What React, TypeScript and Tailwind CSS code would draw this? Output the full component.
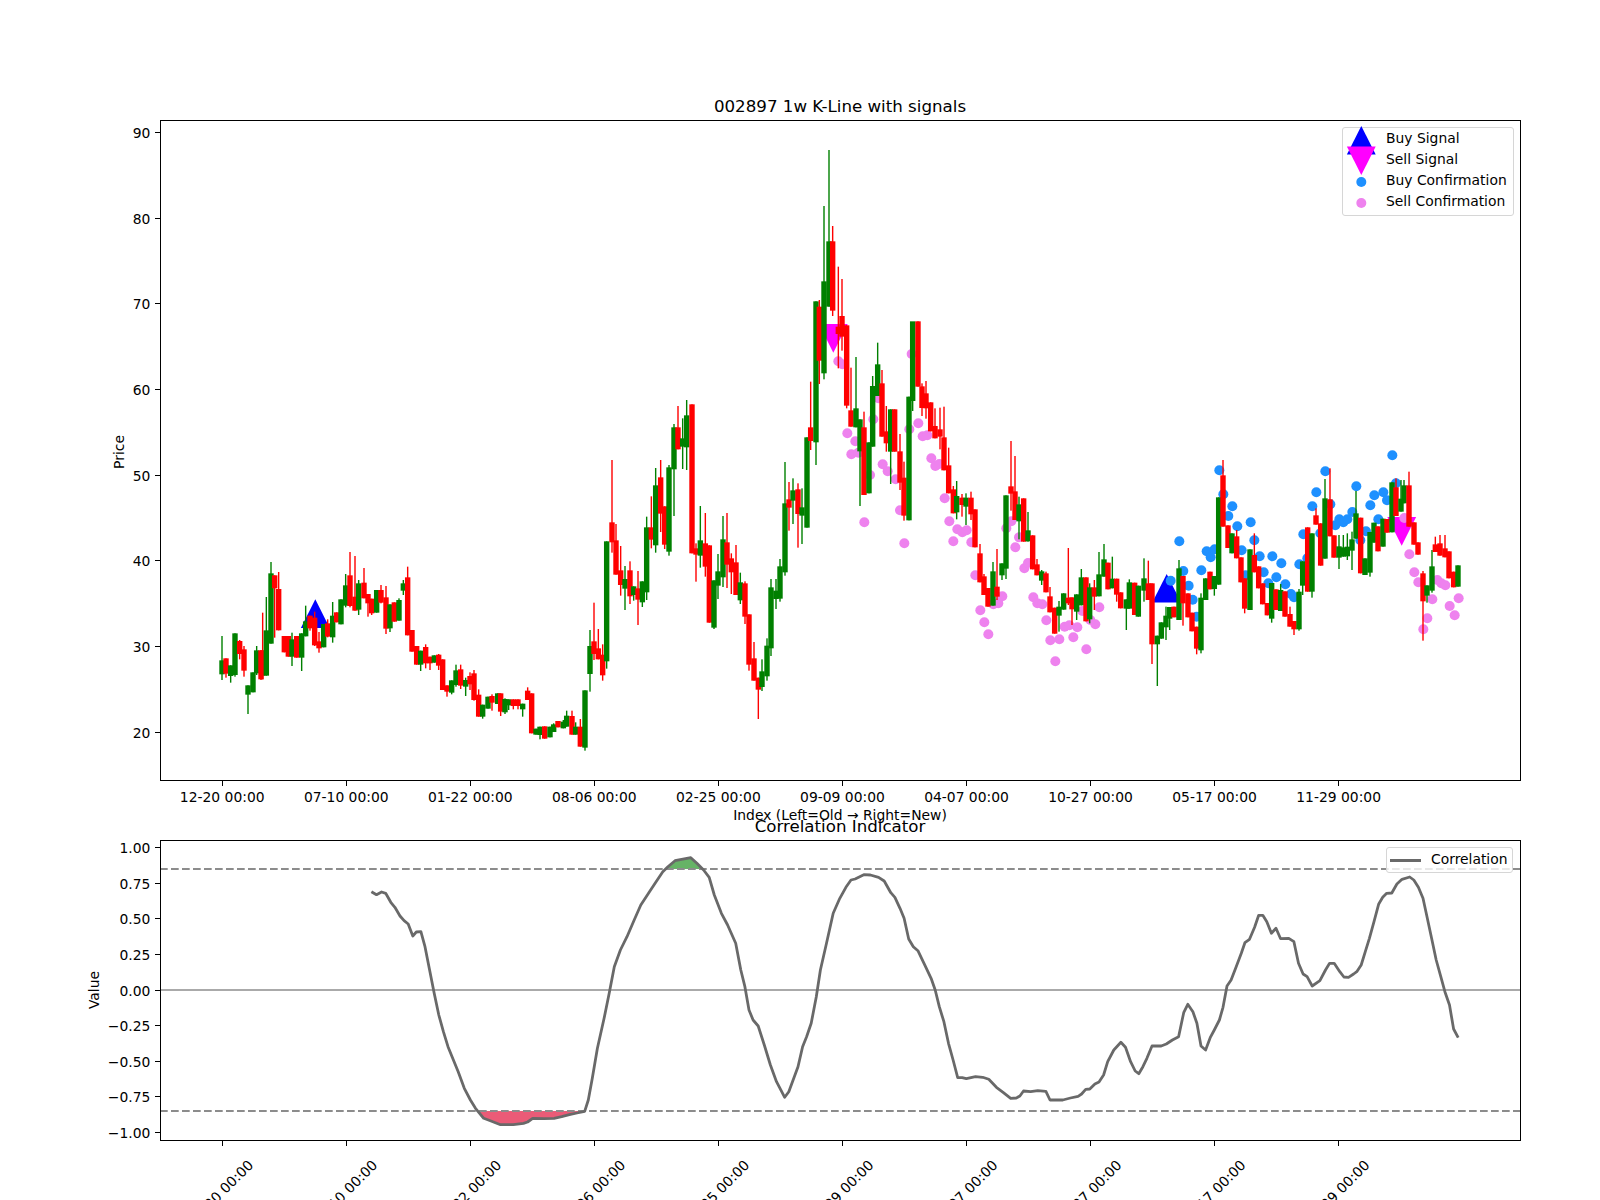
import React from "react";

type Row = [number, "G" | "R", number, number, number?, number?];
type Candle = { x: number; c: string; t: number; b: number; h: number; l: number };

const block = (ox: number, oy: number, rows: Row[]): Candle[] =>
  rows.map(([zx, c, t, b, h, l]) => ({
    x: ox + zx / 3,
    c: c === "G" ? "#008000" : "#ff0000",
    t: oy + t / 3,
    b: oy + b / 3,
    h: oy + (h ?? t) / 3,
    l: oy + (l ?? b) / 3,
  }));

const G = "G" as const;
const R = "R" as const;

const candles: Candle[] = [
  ...block(140, 500, [
    [246,G,481,523,408,540],[258,R,475,521,475,533],[272,G,496,528,496,548],[285,G,400,525,400,530],
    [299,R,423,462,420,478],[312,R,448,512,438,530],[324,G,556,584,556,642],[339,G,517,577],
    [350,G,451,520,438,525],[363,R,451,538,451,540],[368,R,451,527,338,538],[379,G,391,527,291,527],
    [393,G,220,431,186,431],[404,R,226,265,226,413],[416,R,267,391,216,391],[433,R,408,457],
    [445,R,408,470],[456,G,418,470,398,498],[470,R,408,473],[485,G,400,473,400,513],
    [497,G,364,409,317,409],[510,R,347,385,347,392],[524,R,353,436,335,438],[537,R,424,445,396,458],
    [551,G,372,442],[563,R,370,410,358,412],[578,G,347,412,306,428],[590,R,337,367],
    [603,G,298,373],[617,G,256,317,222,322],[630,R,226,318,156,322],[645,R,290,332,168,332],
    [656,G,250,329,240,345],[672,R,248,295,204,295],[684,R,282,310,282,350],[695,R,296,340,296,345],
    [710,G,270,338],[723,R,270,308,255,310],[738,R,292,386,258,402],[750,G,313,385,313,396],
    [763,R,307,365],[777,G,300,362,295,362],[790,G,250,272,240,285],[803,R,232,406,200,406],
    [816,R,390,455],[830,R,438,494],[842,G,452,494,452,513],[857,R,441,490,433,505],
    [870,R,470,490,470,510],[883,G,466,488],[896,R,464,497,462,510],[908,R,478,570],
    [921,R,556,575,556,590],[935,G,541,578,541,583],[948,G,511,555,494,560],[962,R,508,557,494,567],
    [977,G,540,560,533,588],[990,R,528,553,517,570],[1002,R,520,600,510,602],[1016,R,584,650,568,650],
    [1028,G,614,650,614,656],[1044,G,590,626],[1056,R,588,608,583,632],[1073,G,580,612],
    [1082,R,580,635,580,648],[1095,G,597,637,595,642],[1106,G,598,616,598,630],[1120,R,598,618,598,628],
    [1134,R,598,618,598,628],[1148,G,611,628,611,650],[1163,R,572,600,562,600],[1175,R,580,700],
    [1188,G,686,704],[1200,G,680,705,680,718],[1214,R,679,716],[1230,G,680,712],
    [1241,G,673,696,670,696],[1254,R,663,682],[1270,G,665,685,660,685],[1280,G,647,680,632,680],
    [1296,R,648,704,632,704],[1307,G,680,704,667,704],[1321,R,680,740,657,740],[1335,G,571,743,571,752],
  ]),
  ...block(590, 400, [
    [0,G,738,822,690,875],[12,R,724,762,608,780],[25,R,745,778,687,778],[38,R,764,826,733,842],
    [50,G,424,784,424,806],[66,R,367,427,180,458],[78,R,421,524,372,524],[92,R,511,555,438,587],
    [105,G,537,566,498,630],[120,R,511,589,484,612],[131,G,559,585,559,602],[144,R,565,599,513,675],
    [157,G,544,607,544,621],[170,G,382,577,350,600],[184,R,382,419,289,445],[197,G,256,436,204,458],
    [212,R,232,341,180,396],[224,R,319,434,319,447],[237,G,202,455,195,467],[252,G,82,208,72,348],
    [264,R,82,148,18,148],[278,G,115,140,55,207],[290,G,46,142,0,210],[306,R,13,460],
    [318,R,445,464,430,545],[331,G,421,467,318,503],[346,R,430,500,339,530],[358,R,436,668],
    [372,G,541,683,541,687],[384,G,514,557,462,597],[399,G,418,532,348,561],[411,R,427,494,339,564],
    [424,R,475,517,460,582],[438,R,487,585,435,585],[451,G,547,601,518,612],[465,R,550,650,544,672],
    [477,R,643,794,643,812],[492,R,775,842,726,842],[505,R,833,869,833,957],[516,G,814,861,778,873],
    [531,G,737,829,715,842],[543,G,562,745,537,768],[558,G,572,597,537,627],[570,G,499,596,477,605],
    [585,G,310,517,186,527],[597,R,298,323,246,392],[609,G,271,302,235,372],[624,R,268,342,250,443],
    [636,G,322,347,265,432],[651,G,112,383],
  ]),
  ...block(640, 130, [
    [512,R,892,933,755,960],[528,G,514,937,514,1005],[538,R,530,692,510,762],[552,G,454,730,228,748],
    [567,G,334,530,60,530],[578,R,334,542,288,558],[595,R,590,612,410,715],[606,R,558,620,447,662],
    [620,R,586,827,586,835],[633,R,841,890,713,890],[648,G,835,892,681,892],[660,G,868,964,868,1128],
    [672,R,892,1095,845,1095],[687,G,937,1090],[698,G,768,950,738,950],[713,G,703,798,638,798],
    [726,R,760,920,720,920],[739,R,904,940,828,965],[752,G,838,965,838,1062],[764,R,838,965],
    [780,R,964,1058,912,1080],[792,R,1043,1157,995,1172],[807,G,800,1171],[818,G,574,813,748,843],
    [834,R,574,770],[846,R,769,834,760,858],[858,R,790,835,753,866],[872,R,817,904],
    [885,R,888,925,835,925],[900,R,898,920,833,958],[912,R,922,1021,830,1021],[926,R,1006,1090,953,1090],
    [940,R,1078,1150,1068,1150],[950,G,1098,1147,1053,1168],[966,R,1103,1125,1092,1160],[978,G,1103,1130,1090,1185],
    [993,R,1103,1153,1085,1170],
  ]),
  ...block(850, 380, [
    [375,R,388,502,388,502],[390,R,520,607,492,607],[402,R,589,645,582,645],[414,R,624,680],
    [429,G,574,677,546,677],[441,R,620,650,507,660],[456,G,550,586,550,600],[468,G,346,566,346,597],
    [483,R,319,341,183,392],[495,R,334,420,228,420],[507,G,373,424,350,478],[521,R,355,485],
    [534,G,451,484,396,485],[548,R,466,568],[561,R,553,586,537,586],[575,G,574,602,570,615],
    [588,R,580,637,575,637],[600,R,649,697,621,697],[614,R,683,761],[627,G,680,707,663,755],
    [641,G,640,689],[655,R,653,670,504,675],[666,R,652,688,652,735],[680,G,643,695,643,720],
    [694,G,592,676,567,676],[708,R,592,724],[719,G,622,718,610,730],[733,R,622,650,600,690],
    [747,G,583,649,516,649],[762,G,538,590,492,590],
  ]),
  ...block(1000, 420, [
    [324,R,428,508],[337,G,476,505,410,505],[350,R,476,524,476,545],[362,R,517,565],
    [379,G,538,566,538,630],[388,G,487,566,478,566],[404,R,488,585],[415,G,497,590],
    [432,G,475,512,415,545],[445,R,490,540,422,540],[456,R,490,673,490,732],[472,G,647,673,647,798],
    [484,G,607,656],[498,G,587,622,560,660],[509,G,561,596,561,630],[522,R,560,592],
    [537,G,445,600,420,600],[549,R,468,550,468,617],[564,R,520,592],[576,R,578,634],
    [590,R,620,686,620,703],[603,G,533,691,520,700],[617,G,475,540],[630,R,455,508],
    [643,G,468,507,468,527],[656,G,232,494],[669,R,166,320,120,320],[684,R,316,384],
    [696,G,340,400],[710,R,349,415,330,415],[723,R,412,487],[734,R,475,566,475,580],
    [750,G,388,570],[763,R,405,457,340,457],[776,R,439,505],[788,R,490,553],
    [802,R,549,586],[815,G,489,596,489,608],[828,R,508,570],[842,G,510,573,492,573],
    [855,R,514,590],[870,R,582,620,560,620],[882,R,603,628,603,645],[897,G,515,628,507,632],
    [908,G,424,497,424,525],[923,R,322,515],[936,G,340,515,340,533],[948,R,286,314,265,314],
    [962,R,310,437],[975,G,235,416,177,416],[990,R,238,349,145,349],[1002,R,346,413],
    [1017,G,379,413,345,447],[1030,G,382,410,345,410],[1042,G,380,409,340,420],[1056,G,358,392,335,450],
    [1068,G,280,356,213,356],[1082,R,293,460],[1095,G,415,465],[1110,G,336,458,336,470],
    [1122,G,308,368],[1134,R,319,394],[1149,G,296,380],[1161,R,297,338],
    [1176,G,187,337],[1188,R,202,288,175,288],[1203,G,236,275,180,275],[1212,G,196,250,180,250],
    [1227,R,196,320,155,320],[1242,R,307,374],[1254,R,367,404],[1269,R,460,544,453,662],
    [1281,G,496,527,496,548],[1296,G,439,512,390,518],[1306,R,373,396,350,396],[1320,R,370,407,345,407],
    [1335,R,385,412,345,412],[1347,R,394,475],[1361,R,455,502],[1374,G,436,500],
  ]),
];

const pts = (ox: number, oy: number, list: number[][]) => list.map(([x, y]) => [ox + x / 3, oy + y / 3]);

const buyDots = pts(1000, 420, [
  [538,364],[550,453],[512,482],[566,497],[604,451],[620,394],[632,412],[644,388],[578,539],[590,590],
  [658,151],[670,223],[697,259],[685,288],[712,319],[752,307],[725,391],[763,361],[779,409],[817,409],
  [844,430],[791,457],[737,466],[829,472],[805,490],[856,493],[873,522],[882,532],[898,433],[910,343],
  [922,415],[937,259],[949,217],[976,154],[991,253],[1006,316],[1018,298],[1030,307],[1042,298],[1057,276],
  [1069,199],[1111,256],[1123,226],[1150,217],[1161,241],[1177,106],[1135,298],[1098,334],[1081,361],[1188,190],[961,340],
]);

const sellDots = [
  ...pts(640, 130, [[595,694],[607,703],[622,910],[646,934],[634,973],[655,968],[700,868],[715,805],[815,672]]),
  ...pts(850, 380, [
    [43,427],[163,490],[150,391],[98,253],[113,274],[137,298],[60,285],[178,148],[205,130],[218,169],[232,166],
    [244,235],[256,258],[268,252],[284,355],[298,424],[322,448],[337,457],[350,451],[310,484],[364,487],[376,586],
    [391,691],[403,727],[415,763],[430,673],[445,670],[457,649],[469,445],[484,424],[507,472],[496,502],[523,565],
    [534,549],[550,652],[562,670],[577,673],[589,721],[601,781],[628,778],[616,844],[644,740],[658,736],[682,742],
    [670,772],[709,808],[736,733],[748,682],[721,720],[697,693],
  ]),
  ...pts(1000, 420, [
    [1228,403],[1243,457],[1255,487],[1270,628],[1282,595],[1297,538],[1312,480],[1324,490],[1336,496],[1349,558],
    [1364,586],[1376,535],[1213,294],
  ]),
];

const z5 = [
  [532,365],[542,374],[552,366],[560,370],[570,397],[578,412],[588,438],[596,452],[604,462],[613,498],[620,486],[629,485],
  [637,530],[646,600],[655,670],[664,735],[673,785],[682,830],[692,868],[702,905],[714,955],[726,990],[736,1015],[744,1030],
  [752,1045],[765,1052],[785,1064],[810,1064],[830,1060],[838,1056],[848,1045],[870,1046],[890,1045],[905,1040],[920,1034],
  [935,1029],[950,1024],[957,990],[965,925],[975,835],[988,745],[998,670],[1008,590],[1020,540],[1033,500],[1047,450],
  [1060,405],[1075,370],[1090,335],[1103,305],[1113,290],[1127,272],[1140,268],[1158,263],[1170,280],[1183,300],[1194,322],
  [1204,375],[1218,430],[1230,465],[1246,520],[1256,600],[1264,650],[1272,720],[1280,750],[1290,768],[1302,825],[1314,885],
  [1326,935],[1342,982],[1350,965],[1368,890],[1377,830],[1385,800],[1394,760],[1404,680],[1412,600],[1424,520],[1437,430],
  [1450,385],[1462,352],[1472,330],[1480,327],[1497,314],[1510,315],[1526,322],
];
const z6 = [
  [165,333],[178,368],[186,382],[196,415],[204,445],[213,507],[222,530],[231,542],[243,580],[257,625],[265,660],[273,710],
  [282,755],[291,820],[300,870],[309,923],[318,923],[326,926],[344,920],[358,922],[370,928],[385,952],[398,967],[413,985],
  [424,984],[431,978],[438,963],[452,965],[466,962],[482,964],[490,990],[515,990],[530,984],[545,979],[552,972],[560,958],
  [568,957],[578,942],[586,936],[595,915],[603,875],[615,840],[629,817],[638,832],[648,875],[657,903],[664,911],[672,890],
  [680,865],[690,828],[708,828],[718,822],[730,810],[742,800],[752,728],[760,703],[770,725],[778,760],[786,828],[795,840],
  [804,803],[812,780],[822,750],[829,712],[837,648],[845,630],[855,590],[865,550],[872,518],[881,508],[891,472],[899,436],
  [907,436],[915,455],[924,490],[933,475],[942,506],[958,505],[968,515],[977,580],[986,612],[994,620],[1004,648],[1019,632],
  [1030,600],[1038,580],[1047,580],[1058,605],[1066,621],[1075,622],[1085,612],[1092,604],[1100,585],[1108,545],[1116,505],
  [1125,455],[1134,403],[1142,382],[1150,370],[1160,369],[1170,342],[1180,328],[1195,321],[1203,330],[1212,352],[1221,385],
  [1229,440],[1238,505],[1247,570],[1256,620],[1264,665],[1273,705],[1281,777],[1290,803],
];
const corr = [
  ...z5.map(([x, y]) => `${(100 + x / 1.96).toFixed(1)},${(770 + y / 3).toFixed(1)}`),
  ...z6.map(([x, y]) => `${(800 + x / 1.96).toFixed(1)},${(770 + y / 3).toFixed(1)}`),
].join(" ");

const dates = ["12-20 00:00","07-10 00:00","01-22 00:00","08-06 00:00","02-25 00:00","09-09 00:00","04-07 00:00","10-27 00:00","05-17 00:00","11-29 00:00"];
const tickX = dates.map((_, i) => 222.2 + i * 124.05);
const priceTicks = [20, 30, 40, 50, 60, 70, 80, 90];
const corrTicks = ["1.00","0.75","0.50","0.25","0.00","−0.25","−0.50","−0.75","−1.00"];

const tri = (x: number, y: number, up: boolean) =>
  up ? `${x},${y} ${x - 14.4},${y + 28.6} ${x + 14.4},${y + 28.6}` : `${x},${y} ${x - 14.4},${y - 28.6} ${x + 14.4},${y - 28.6}`;

function LegendRow({ icon, label }: { icon: React.ReactNode; label: string }) {
  return (
    <div className="flex h-[21px] items-center">
      <span className="relative w-[43px] shrink-0 h-[21px]">{icon}</span>
      <span className="leading-none whitespace-nowrap">{label}</span>
    </div>
  );
}

export default function App() {
  return (
    <div className="w-[1600px] h-[1200px] overflow-hidden bg-white text-[13.89px] text-black font-['DejaVu_Sans',sans-serif]">
      <section className="relative h-[830px]">
        <svg width={1600} height={830} viewBox="0 0 1600 830" className="block overflow-visible" fill="#000">
          {[tri(315.3, 599.3, true), tri(1166.7, 574, true)].map((p) => (
            <polygon key={p} points={p} fill="#0000ff" />
          ))}
          {[tri(833.3, 352.7, false), tri(1401.7, 545.7, false)].map((p) => (
            <polygon key={p} points={p} fill="#ff00ff" />
          ))}
          {sellDots.map(([x, y], i) => (
            <circle key={i} cx={x} cy={y} r={5} fill="#ee82ee" />
          ))}
          {buyDots.map(([x, y], i) => (
            <circle key={i} cx={x} cy={y} r={5} fill="#1e90ff" />
          ))}
          {candles.map((d, i) => (
            <g key={i} fill={d.c}>
              <rect x={d.x - 0.7} y={d.h} width={1.4} height={Math.max(d.l - d.h, 0)} />
              <rect x={d.x - 2.7} y={d.t} width={5.4} height={d.b - d.t} />
            </g>
          ))}
          <rect x={160.5} y={120.5} width={1360} height={660} fill="none" stroke="#000" strokeWidth={1} shapeRendering="crispEdges" />
          {tickX.map((x, i) => (
            <g key={i}>
              <line x1={x} x2={x} y1={781} y2={786} stroke="#000" strokeWidth={1} shapeRendering="crispEdges" />
              <text x={x} y={801.5} textAnchor="middle">{dates[i]}</text>
            </g>
          ))}
          {priceTicks.map((v) => {
            const y = 732.3 - (v - 20) * 8.57;
            return (
              <g key={v}>
                <line x1={155} x2={160} y1={y} y2={y} stroke="#000" strokeWidth={1} shapeRendering="crispEdges" />
                <text x={150.3} y={y + 5.5} textAnchor="end">{v}</text>
              </g>
            );
          })}
          <text x={840} y={112} textAnchor="middle" className="text-[16.67px]">002897 1w K-Line with signals</text>
          <text x={840} y={820} textAnchor="middle">Index (Left=Old → Right=New)</text>
          <text transform="translate(124 452) rotate(-90)" textAnchor="middle">Price</text>
        </svg>
        <div className="absolute left-[1342px] top-[127px] w-[172px] h-[89px] rounded-[3px] border border-[#d6d6d6] bg-white/80">
          <LegendRow label="Buy Signal" icon={<svg width={40} height={40} className="absolute left-0 -top-[4px] overflow-visible"><polygon points="18.3,2 3.9,30.6 32.7,30.6" fill="#0000ff" /></svg>} />
          <LegendRow label="Sell Signal" icon={<svg width={40} height={40} className="absolute left-0 -top-[5px] overflow-visible"><polygon points="18.3,31 3.9,2.4 32.7,2.4" fill="#ff00ff" /></svg>} />
          <LegendRow label="Buy Confirmation" icon={<svg width={40} height={21} className="absolute left-0 top-0"><circle cx={18.3} cy={12} r={5} fill="#1e90ff" /></svg>} />
          <LegendRow label="Sell Confirmation" icon={<svg width={40} height={21} className="absolute left-0 top-0"><circle cx={18.3} cy={12} r={5} fill="#ee82ee" /></svg>} />
        </div>
      </section>
      <section className="relative h-[370px]">
        <svg width={1600} height={370} viewBox="0 830 1600 370" className="block overflow-visible" fill="#000">
          <defs>
            <clipPath id="above"><rect x={160} y={840} width={1360} height={29} /></clipPath>
            <clipPath id="below"><rect x={160} y={1111} width={1360} height={29} /></clipPath>
          </defs>
          <polygon points={corr} fill="#66b366" clipPath="url(#above)" />
          <polygon points={corr} fill="#ea5b77" clipPath="url(#below)" />
          <line x1={160} x2={1520} y1={869} y2={869} stroke="#8c8c8c" strokeWidth={2.08} strokeDasharray="7.7 3.3" />
          <line x1={160} x2={1520} y1={1111} y2={1111} stroke="#8c8c8c" strokeWidth={2.08} strokeDasharray="7.7 3.3" />
          <line x1={160} x2={1520} y1={990} y2={990} stroke="#aaaaaa" strokeWidth={2.08} />
          <polyline points={corr} fill="none" stroke="#696969" strokeWidth={2.78} strokeLinejoin="round" />
          <rect x={160.5} y={840.5} width={1360} height={300} fill="none" stroke="#000" strokeWidth={1} shapeRendering="crispEdges" />
          {tickX.map((x, i) => (
            <g key={i}>
              <line x1={x} x2={x} y1={1141} y2={1146} stroke="#000" strokeWidth={1} shapeRendering="crispEdges" />
              <text transform={`translate(${x + 2} 1196) rotate(-45)`} textAnchor="middle">{dates[i]}</text>
            </g>
          ))}
          {corrTicks.map((t, i) => {
            const y = 847.4 + i * 35.65;
            return (
              <g key={t}>
                <line x1={155} x2={160} y1={y} y2={y} stroke="#000" strokeWidth={1} shapeRendering="crispEdges" />
                <text x={150.3} y={y + 5.5} textAnchor="end">{t}</text>
              </g>
            );
          })}
          <text x={840} y={832} textAnchor="middle" className="text-[16.67px]">Correlation Indicator</text>
          <text transform="translate(99 990) rotate(-90)" textAnchor="middle">Value</text>
        </svg>
        <div className="absolute left-[1386px] top-[17px] flex h-[26px] w-[127px] items-center rounded-[3px] border border-[#d6d6d6] bg-white/80">
          <span className="ml-[3px] h-[3px] w-[31px] bg-[#696969]" />
          <span className="ml-[10px] leading-none">Correlation</span>
        </div>
      </section>
    </div>
  );
}
